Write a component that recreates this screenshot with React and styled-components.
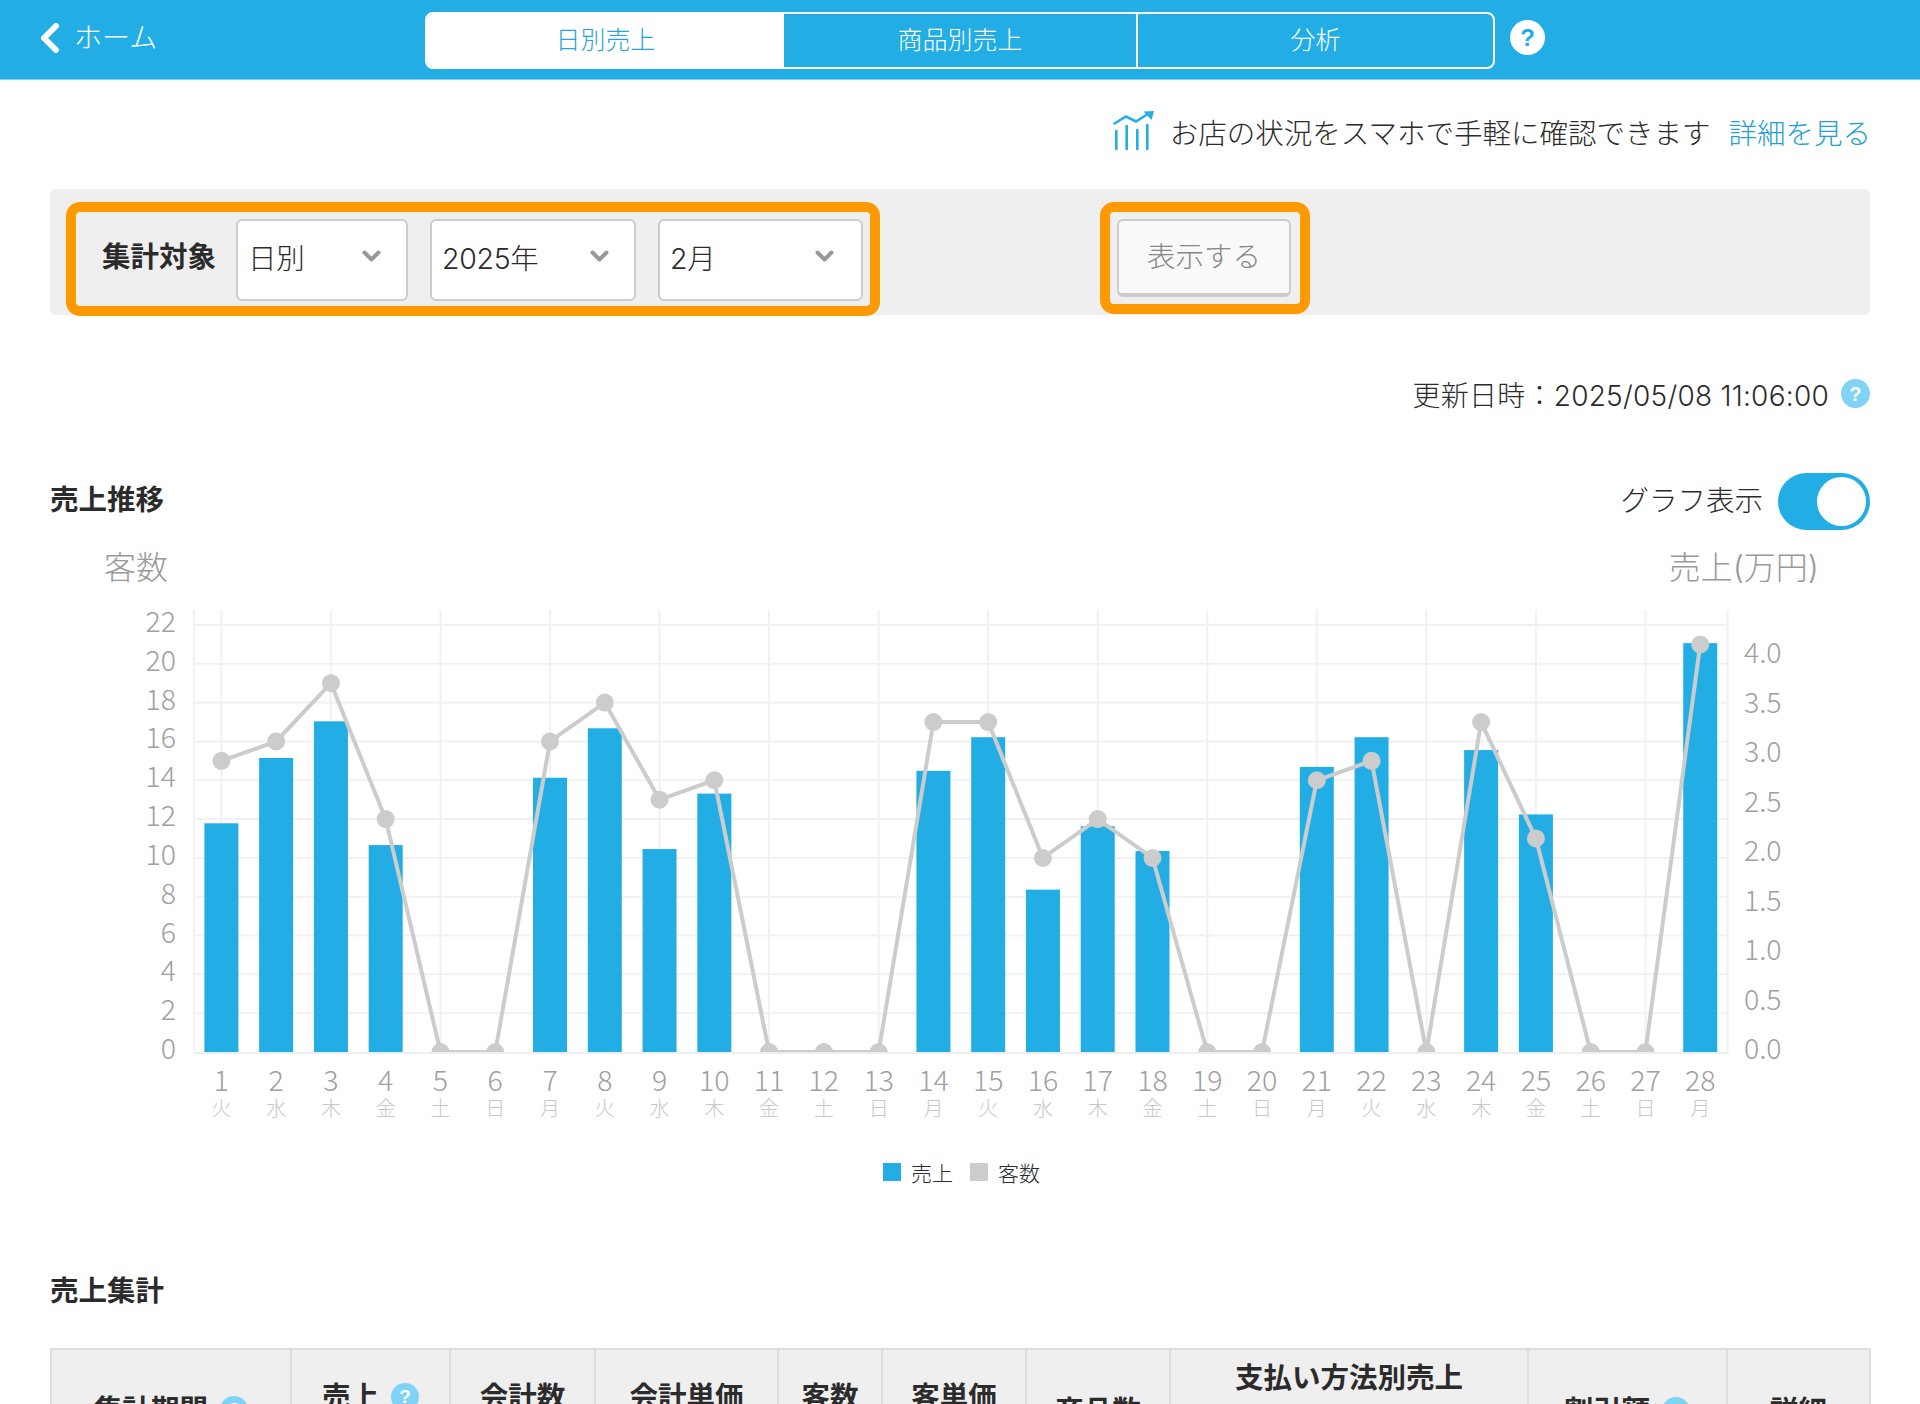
import React from 'react';
import styled, { createGlobalStyle } from 'styled-components';

const BLUE = '#22aee5';
const GREY = '#cccccc';
const LINE = '#f1f1f1';

const GlobalStyle = createGlobalStyle`
  html, body {
    margin: 0;
    padding: 0;
    height: 1404px;
    overflow: hidden;
    background: #fff;
  }
  body {
    font-family: "Inter", "Noto Sans CJK JP", "Noto Sans", sans-serif;
    color: #2b2b2b;
  }
`;

const Page = styled.div`
  width: 1920px;
  height: 1404px;
  overflow: hidden;
`;

const Header = styled.header`
  height: 79px;
  background: ${BLUE};
  border-bottom: 1px solid #7fd0f0;
  display: flex;
  align-items: center;
  padding-left: 40px;
`;

const BackLink = styled.a`
  width: 385px;
  display: flex;
  align-items: center;
  gap: 14px;
  color: #fff;
  font-size: 28px;
  font-weight: 300;
  line-height: 1;
  margin-top: -4px;
`;

const Tabs = styled.nav`
  width: 1070px;
  height: 57px;
  margin-top: 2px;
  box-sizing: border-box;
  border: 2px solid #fff;
  border-radius: 8px;
  display: grid;
  grid-template-columns: 357px 352px 1fr;
  overflow: hidden;
`;

const Tab = styled.div`
  display: flex;
  align-items: center;
  justify-content: center;
  padding-bottom: 5px;
  font-size: 25px;
  font-weight: 300;
  background: ${(p) => (p.$active ? '#fff' : 'transparent')};
  color: ${(p) => (p.$active ? '#22a5da' : '#fff')};
  border-left: ${(p) => (p.$divided ? '2px solid #fff' : 'none')};
`;

const HelpDot = styled.span`
  display: inline-flex;
  align-items: center;
  justify-content: center;
  flex: none;
  width: ${(p) => p.$size}px;
  height: ${(p) => p.$size}px;
  border-radius: 50%;
  background: ${(p) => p.$bg || '#7fd3f5'};
  color: ${(p) => p.$fg || '#fff'};
  font-family: "Liberation Sans", sans-serif;
  font-weight: 700;
  font-size: ${(p) => Math.round(p.$size * 0.68)}px;
  line-height: 1;
`;

const HeaderHelp = styled(HelpDot)`
  margin-left: 15px;
  margin-top: -4px;
`;

const Content = styled.main`
  padding: 0 50px;
`;

const PromoRow = styled.div`
  height: 102px;
  padding-bottom: 7px;
  display: flex;
  align-items: center;
  justify-content: flex-end;
  font-size: 28.5px;
  font-weight: 300;
  white-space: nowrap;
`;

const PromoText = styled.span`
  margin-left: 15px;
  margin-right: 18px;
`;

const PromoLink = styled.a`
  color: #22a0d4;
  margin-right: -1px;
`;

const FilterPanel = styled.section`
  height: 126px;
  padding: 13px 0 0 16px;
  box-sizing: border-box;
  background: #efefef;
  border-radius: 6px;
  display: flex;
  align-items: flex-start;
`;

const Highlight = styled.div`
  box-sizing: border-box;
  height: ${(p) => p.$height}px;
  padding: 7px 7px 0 ${(p) => p.$left || 7}px;
  border: 10px solid #ff9900;
  border-radius: 14px;
  display: flex;
  align-items: flex-start;
  gap: 22px;
`;

const FilterLabel = styled.span`
  font-size: 28.5px;
  font-weight: 700;
  line-height: 75px;
  width: 113px;
  margin-right: -1px;
  white-space: nowrap;
`;

const Select = styled.div`
  box-sizing: border-box;
  width: ${(p) => p.$width}px;
  height: 82px;
  padding: 0 ${(p) => p.$right}px 8px 10px;
  background: #fff;
  border: 2px solid #ccc;
  border-radius: 6px;
  display: flex;
  align-items: center;
  justify-content: space-between;
  font-size: 28.5px;
  font-weight: 300;
  letter-spacing: -0.3px;
`;

const ShowButton = styled.button`
  box-sizing: border-box;
  width: 174px;
  height: 78px;
  padding: 0 0 5px;
  background: #f9f9f9;
  border: 2px solid #ccc;
  border-bottom-width: 4px;
  border-radius: 6px;
  color: #888;
  font: 300 28.5px "Noto Sans CJK JP", sans-serif;
`;

const SubmitBox = styled(Highlight)`
  width: 210px;
  margin-left: 220px;
`;

const UpdatedRow = styled.div`
  margin-top: 58px;
  height: 41px;
  display: flex;
  align-items: center;
  justify-content: flex-end;
  gap: 12px;
  font-size: 28px;
  font-weight: 300;
  letter-spacing: 0.25px;
`;

const SectionHead = styled.div`
  margin-top: 59px;
  height: 57px;
  display: flex;
  align-items: center;
  justify-content: space-between;
`;

const SectionTitle = styled.h2`
  margin: 0;
  font-size: 28.5px;
  font-weight: 700;
  line-height: 40px;
  margin-top: -3px;
`;

const ToggleWrap = styled.div`
  display: flex;
  align-items: center;
  gap: 15px;
  font-size: 28.5px;
  font-weight: 300;
`;

const ToggleLabel = styled.span`
  padding-bottom: 6px;
`;

const ToggleTrack = styled.div`
  box-sizing: border-box;
  width: 92px;
  height: 57px;
  padding: 4px;
  border-radius: 29px;
  background: ${BLUE};
  display: flex;
  justify-content: flex-end;
`;

const ToggleKnob = styled.div`
  width: 49px;
  height: 49px;
  border-radius: 50%;
  background: #fff;
`;

const AxisTitles = styled.div`
  margin-top: 18px;
  height: 42px;
  padding: 0 51px 0 54px;
  display: flex;
  justify-content: space-between;
  font-size: 32px;
  font-weight: 300;
  line-height: 40px;
  color: #999;
`;

const ChartSvg = styled.svg`
  display: block;
  width: 1820px;
  height: 550px;
  font-family: "Noto Sans CJK JP", sans-serif;
  font-weight: 300;
`;

const Legend = styled.div`
  margin-top: 12px;
  height: 40px;
  padding-left: 3px;
  display: flex;
  align-items: center;
  justify-content: center;
  font-size: 21px;
  font-weight: 300;
`;

const LegendSwatch = styled.i`
  width: 18px;
  height: 18px;
  margin-right: 10px;
  background: ${(p) => p.$color};
`;

const LegendName = styled.span`
  margin-right: 17px;
  &:last-child {
    margin-right: 0;
  }
`;

const SummaryTitle = styled(SectionTitle)`
  margin-top: 79px;
`;

const Table = styled.table`
  width: 1819px;
  margin: 37px 0 0;
  border-collapse: collapse;
  table-layout: fixed;
`;

const HeadCell = styled.th`
  height: 120px;
  padding: ${(p) => p.$top}px 0 0;
  vertical-align: top;
  background: #efefef;
  border: 2px solid #ddd;
  font-size: 28.5px;
  font-weight: 700;
  line-height: 40px;
  white-space: nowrap;
`;

const HeadHelp = styled(HelpDot)`
  margin-left: 12px;
  vertical-align: 4px;
`;

// 日別の実績 [売上(万円), 客数]
const DAYS = [
  [2.31, 15], [2.97, 16], [3.34, 19], [2.09, 12], [0, 0], [0, 0], [2.77, 16],
  [3.27, 18], [2.05, 13], [2.61, 14], [0, 0], [0, 0], [0, 0], [2.84, 17],
  [3.18, 17], [1.64, 10], [2.28, 12], [2.03, 10], [0, 0], [0, 0], [2.88, 14],
  [3.18, 15], [0, 0], [3.05, 17], [2.4, 11], [0, 0], [0, 0], [4.13, 21],
];
const WEEK = ['火', '水', '木', '金', '土', '日', '月'];

const LEFT = 194;
const RIGHT = 1727.6;
const BASE = 1052;
const BAND = (RIGHT - LEFT) / 28;
const dayX = (i) => LEFT + BAND * (i + 0.5);
const salesY = (v) => BASE - v * 99;
const guestY = (v) => BASE - v * 19.41;

const SalesChart = () => {
  const linePoints = DAYS.map(([, g], i) => `${dayX(i)},${guestY(g)}`).join(' ');
  return (
    <ChartSvg viewBox="50 590 1820 550">
      <defs>
        <clipPath id="plot">
          <rect x={LEFT} y="600" width={RIGHT - LEFT} height={BASE - 600} />
        </clipPath>
      </defs>
      {Array.from({ length: 11 }, (_, i) => (
        <line key={i} x1={LEFT} x2={RIGHT} y1={guestY((i + 1) * 2)} y2={guestY((i + 1) * 2)} stroke={LINE} strokeWidth="2" />
      ))}
      {DAYS.map((_, i) => i % 2 === 0 && (
        <line key={i} x1={dayX(i)} x2={dayX(i)} y1="610" y2={BASE} stroke={LINE} strokeWidth="2" />
      ))}
      <line x1={LEFT} x2={LEFT} y1="610" y2={BASE} stroke={LINE} strokeWidth="2" />
      <line x1={RIGHT} x2={RIGHT} y1="610" y2={BASE} stroke={LINE} strokeWidth="2" />
      <line x1={LEFT} x2={RIGHT} y1={BASE + 1} y2={BASE + 1} stroke="#eeeeee" strokeWidth="2" />
      {DAYS.map(([s], i) => s > 0 && (
        <rect key={i} x={dayX(i) - 17} y={salesY(s)} width="34" height={BASE - salesY(s)} fill={BLUE} />
      ))}
      <g clipPath="url(#plot)">
        <polyline points={linePoints} fill="none" stroke={GREY} strokeWidth="4" />
        {DAYS.map(([, g], i) => (
          <circle key={i} cx={dayX(i)} cy={guestY(g)} r="9" fill={GREY} />
        ))}
      </g>
      {Array.from({ length: 12 }, (_, i) => (
        <text key={i} x="176" y={guestY(i * 2) - 5.5} textAnchor="end" dominantBaseline="central" fontSize="28.5" fill="#a0a0a0">
          {i * 2}
        </text>
      ))}
      {Array.from({ length: 9 }, (_, i) => (
        <text key={i} x="1744" y={salesY(i * 0.5) - 5.5} dominantBaseline="central" fontSize="28.5" fill="#a0a0a0">
          {(i * 0.5).toFixed(1)}
        </text>
      ))}
      {DAYS.map((_, i) => (
        <g key={i} textAnchor="middle">
          <text x={dayX(i)} y="1078" dominantBaseline="central" fontSize="28.5" fill="#a0a0a0">{i + 1}</text>
          <text x={dayX(i)} y="1107" dominantBaseline="central" fontSize="20" fill="#c8c8c8">{WEEK[i % 7]}</text>
        </g>
      ))}
    </ChartSvg>
  );
};

const TrendIcon = () => (
  <svg width="42" height="40" viewBox="0 0 42 40" fill="none" stroke={BLUE} strokeWidth="2.6" strokeLinecap="round">
    <path d="M3.3 20V38M13.7 15V38M24.3 19V38M34.3 14V38" />
    <path d="M1.5 12.5L13 5.5L23 10.5L34 3.5" />
    <path d="M30.5 0.5L41 0L38.5 9Z" fill={BLUE} stroke="none" />
  </svg>
);

const Chevron = () => (
  <svg width="19" height="12" viewBox="0 0 19 12" fill="none" stroke="#999" strokeWidth="4" strokeLinecap="round" strokeLinejoin="round">
    <path d="M2.5 2.5L9.5 9.5L16.5 2.5" />
  </svg>
);

const BackIcon = () => (
  <svg width="20" height="30" viewBox="0 0 20 30" fill="none" stroke="#fff" strokeWidth="6" strokeLinecap="round" strokeLinejoin="round">
    <path d="M16 3L4 15L16 27" />
  </svg>
);

const COLUMNS = [
  { name: '集計期間', width: 240, top: 40, help: true },
  { name: '売上', width: 159, top: 27, help: true },
  { name: '会計数', width: 145, top: 27 },
  { name: '会計単価', width: 183, top: 27 },
  { name: '客数', width: 104, top: 27 },
  { name: '客単価', width: 144, top: 27 },
  { name: '商品数', width: 144, top: 41 },
  { name: '支払い方法別売上', width: 358, top: 8 },
  { name: '割引額', width: 199, top: 41, help: true },
  { name: '詳細', width: 143, top: 41 },
];

const App = () => (
  <Page>
    <GlobalStyle />
    <Header>
      <BackLink><BackIcon />ホーム</BackLink>
      <Tabs>
        <Tab $active>日別売上</Tab>
        <Tab>商品別売上</Tab>
        <Tab $divided>分析</Tab>
      </Tabs>
      <HeaderHelp $size={35} $bg="#fff" $fg={BLUE}>?</HeaderHelp>
    </Header>
    <Content>
      <PromoRow>
        <TrendIcon />
        <PromoText>お店の状況をスマホで手軽に確認できます</PromoText>
        <PromoLink>詳細を見る</PromoLink>
      </PromoRow>
      <FilterPanel>
        <Highlight $height={114} $left={26}>
          <FilterLabel>集計対象</FilterLabel>
          <Select $width={172} $right={25}>日別<Chevron /></Select>
          <Select $width={206} $right={25}>2025年<Chevron /></Select>
          <Select $width={205} $right={27}>2月<Chevron /></Select>
        </Highlight>
        <SubmitBox $height={112}>
          <ShowButton>表示する</ShowButton>
        </SubmitBox>
      </FilterPanel>
      <UpdatedRow>
        更新日時：2025/05/08 11:06:00
        <HelpDot $size={29}>?</HelpDot>
      </UpdatedRow>
      <SectionHead>
        <SectionTitle>売上推移</SectionTitle>
        <ToggleWrap>
          <ToggleLabel>グラフ表示</ToggleLabel>
          <ToggleTrack><ToggleKnob /></ToggleTrack>
        </ToggleWrap>
      </SectionHead>
      <AxisTitles>
        <span>客数</span>
        <span>売上(万円)</span>
      </AxisTitles>
      <SalesChart />
      <Legend>
        <LegendSwatch $color={BLUE} />
        <LegendName>売上</LegendName>
        <LegendSwatch $color={GREY} />
        <LegendName>客数</LegendName>
      </Legend>
      <SummaryTitle>売上集計</SummaryTitle>
      <Table>
        <colgroup>
          {COLUMNS.map((c) => <col key={c.name} style={{ width: c.width }} />)}
        </colgroup>
        <thead>
          <tr>
            {COLUMNS.map((c) => (
              <HeadCell key={c.name} $top={c.top}>
                {c.name}
                {c.help && <HeadHelp $size={28}>?</HeadHelp>}
              </HeadCell>
            ))}
          </tr>
        </thead>
      </Table>
    </Content>
  </Page>
);

export default App;
